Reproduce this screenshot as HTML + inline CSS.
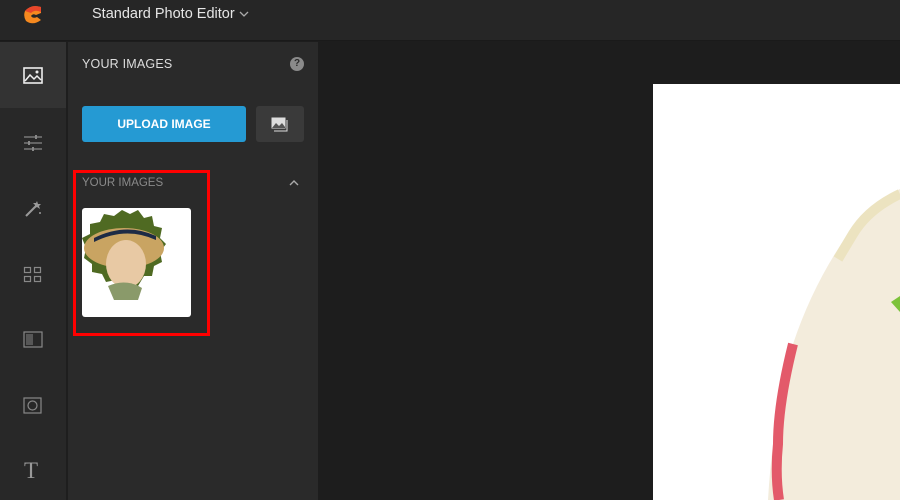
<!DOCTYPE html>
<html><head><meta charset="utf-8"><style>
*{margin:0;padding:0;box-sizing:border-box}
body{width:900px;height:500px;overflow:hidden;background:#1d1d1d;font-family:"Liberation Sans",sans-serif;position:relative}
.top{position:absolute;left:0;top:0;width:900px;height:41px;background:#262626;border-bottom:1px solid #1a1a1a}
.title{position:absolute;left:92px;top:6px;color:#e6e6e6;font-size:14.5px}
.side{position:absolute;left:0;top:42px;width:66px;height:458px;background:#282828}
.sep{position:absolute;left:66px;top:42px;width:2px;height:458px;background:#1e1e1e}
.panel{position:absolute;left:68px;top:42px;width:250px;height:458px;background:#2a2a2a}
.active{position:absolute;left:0;top:0;width:66px;height:66px;background:#333}
.ic{position:absolute;left:23px}
.h{position:absolute;left:14px;top:15px;color:#ddd;font-size:12.5px;letter-spacing:.2px}
.q{position:absolute;left:222px;top:15px;width:14px;height:14px;border-radius:50%;background:#8a8a8a;color:#2a2a2a;font-size:10px;font-weight:bold;text-align:center;line-height:14px}
.up{position:absolute;left:14px;top:64px;width:164px;height:36px;background:#259ad3;border-radius:3px;color:#fff;font-weight:bold;font-size:12px;text-align:center;line-height:37px}
.gb{position:absolute;left:188px;top:64px;width:48px;height:36px;background:#3a3a3a;border-radius:3px}
.sub{position:absolute;left:14px;top:135px;color:#8a8a8a;font-size:11.5px}
.red{position:absolute;left:73px;top:170px;width:137px;height:166px;border:3px solid #f00}
.thumb{position:absolute;left:82px;top:208px;width:109px;height:109px;background:#fff;border-radius:3px;overflow:hidden}
.canvas{position:absolute;left:653px;top:84px;width:247px;height:416px;background:#fff;overflow:hidden}
</style></head><body>
<div class="top">
<svg style="position:absolute;left:23px;top:4px" width="20" height="20" viewBox="0 0 20 20"><path d="M2 7 Q8 0 18 3 L18 9 L13 11 Q10 9 8 12 Q10 15 14 13 L18 16 Q10 22 3 17 Q0 12 2 7Z" fill="#f5891f"/><path d="M2 7 Q8 0 18 3 L18 8 Q12 5 8 9 Z" fill="#e8452a"/></svg>
<div class="title">Standard Photo Editor</div>
<svg style="position:absolute;left:239px;top:10px" width="10" height="8"><path d="M1 2 L5 6 L9 2" stroke="#aaa" fill="none" stroke-width="1.3"/></svg>
</div>
<div class="side">
<div class="active"></div>
<svg class="ic" style="top:25px" width="20" height="17"><rect x="1" y="1" width="18" height="15" fill="none" stroke="#eee" stroke-width="1.6"/><path d="M2 14 L7 8 L11 12 L14 9 L18 13" stroke="#eee" fill="none" stroke-width="1.5"/><circle cx="14" cy="5" r="1.5" fill="#eee"/></svg>
<svg class="ic" style="top:92px" width="20" height="18" stroke="#888" stroke-width="1.2"><path d="M1 3H19M1 9H19M1 15H19"/><path d="M13 1V5M6 7V11M10 13V17" stroke-width="2"/></svg>
<svg class="ic" style="top:157px" width="20" height="20"><path d="M3 17 L13 7" stroke="#999" stroke-width="2"/><path d="M14 2 L15 5 L18 5 L16 7 L17 10 L14 8 L12 9 L12 6 L10 4 L13 4Z" fill="#999"/><circle cx="17" cy="14" r="1" fill="#999"/></svg>
<svg class="ic" style="top:224px" width="20" height="18" fill="none" stroke="#888" stroke-width="1.2"><rect x="1.5" y="1.5" width="6" height="5"/><rect x="11.5" y="1.5" width="6" height="5"/><rect x="1.5" y="10.5" width="6" height="5"/><rect x="11.5" y="10.5" width="6" height="5"/></svg>
<svg class="ic" style="top:289px" width="20" height="18"><rect x="1" y="1" width="18" height="15" fill="none" stroke="#888" stroke-width="1.2"/><rect x="3" y="3" width="7" height="11" fill="#777" opacity=".6"/></svg>
<svg class="ic" style="top:355px" width="20" height="18" fill="none" stroke="#888" stroke-width="1.2"><rect x="1" y="1" width="17" height="15"/><circle cx="9.5" cy="8.5" r="4.5"/></svg>
<div style="position:absolute;left:24px;top:416px;color:#999;font-family:'Liberation Serif',serif;font-size:23px">T</div>
</div>
<div class="sep"></div>
<div class="panel">
<div class="h">YOUR IMAGES</div>
<div class="q">?</div>
<div class="up">UPLOAD IMAGE</div>
<div class="gb"><svg style="position:absolute;left:15px;top:11px" width="18" height="15"><rect x="0.5" y="0.5" width="14" height="11" fill="#ddd"/><path d="M1 11 L5 6 L8 9 L11 6 L14 10 V11Z" fill="#555"/><path d="M16 3 V14 H3" stroke="#ddd" fill="none"/></svg></div>
<div class="sub">YOUR IMAGES</div>
<svg style="position:absolute;left:221px;top:137px" width="10" height="7"><path d="M1 6 L5 2 L9 6" stroke="#aaa" fill="none" stroke-width="1.4"/></svg>
</div>
<div class="red"></div>
<div class="thumb">
<svg width="109" height="109"><polygon points="40,2 48,6 56,2 62,10 70,8 72,18 80,20 78,30 84,36 78,44 80,54 72,58 70,68 62,68 56,78 48,74 40,80 34,72 24,74 20,66 10,64 10,56 2,50 4,40 0,30 8,26 8,16 18,14 22,6 32,8" fill="#4f6a22"/><ellipse cx="42" cy="40" rx="40" ry="20" fill="#c9a462"/><ellipse cx="44" cy="56" rx="20" ry="24" fill="#e8c9a4"/><path d="M12 34 Q44 18 74 32 L74 28 Q44 14 12 30Z" fill="#1d2b45"/><path d="M26 78 Q44 70 60 80 L56 92 L32 92Z" fill="#8a9a6a"/></svg>
</div>
<div class="canvas">
<svg width="247" height="416"><path d="M247 105 Q215 120 195 150 Q160 200 140 260 Q120 330 115 416 H247Z" fill="#f3ecdc"/><path d="M247 110 Q215 125 200 150 L185 175" stroke="#ece3c0" stroke-width="10" fill="none"/><path d="M140 260 Q125 320 125 360 Q122 390 126 416" stroke="#e35a6a" stroke-width="10" fill="none"/><path d="M238 218 L247 212 L247 228Z" fill="#7cc23a"/></svg>
</div>
</body></html>
